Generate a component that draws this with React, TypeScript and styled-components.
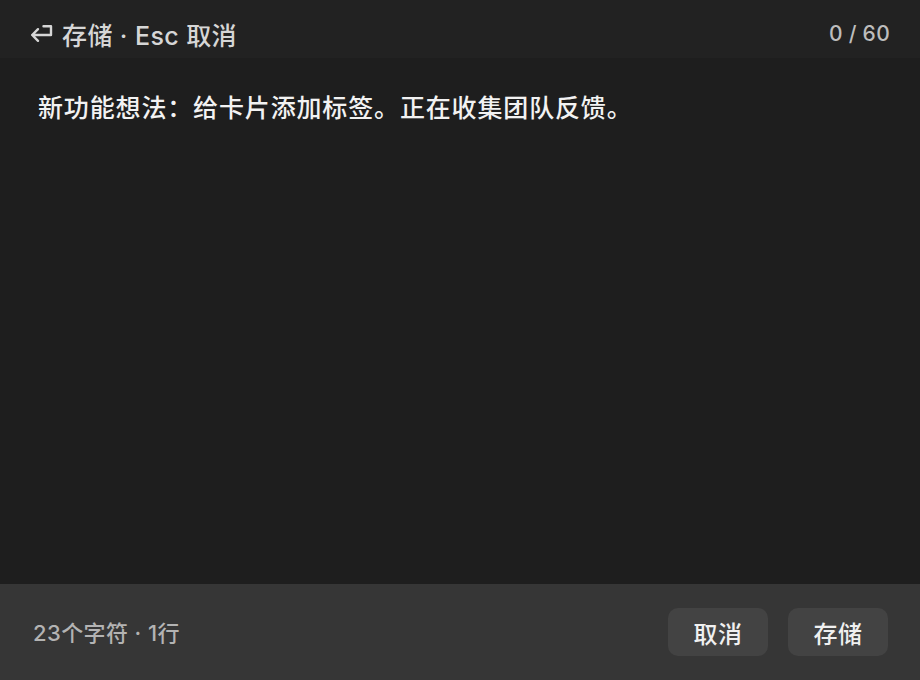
import * as React from "react";
import styled, { createGlobalStyle } from "styled-components";

const GlobalStyle = createGlobalStyle`
  html, body {
    margin: 0;
    padding: 0;
    background: #1e1e1e;
  }
  #root {
    height: 100vh;
  }
`;

const Editor = styled.div`
  height: 100vh;
  display: flex;
  flex-direction: column;
  font-family: Inter, "Noto Sans CJK SC", sans-serif;
  background: #1e1e1e;
`;

const Header = styled.div`
  height: 58px;
  flex-shrink: 0;
  display: flex;
  align-items: center;
  justify-content: space-between;
  padding: 10px 30px 0 30px;
  background: #222222;
  box-sizing: border-box;
`;

const Hint = styled.div`
  display: flex;
  align-items: center;
  gap: 8px;
  color: #d6d6d6;
  font-size: 25px;
  font-weight: 500;
  letter-spacing: 0.4px;
`;

const Counter = styled.div`
  color: #bdbdbd;
  font-size: 21px;
  font-weight: 500;
  letter-spacing: 0.3px;
  margin-top: -1px;
`;

const Body = styled.div`
  flex: 1;
  padding: 30px 38px;
  box-sizing: border-box;
`;

const Text = styled.div`
  color: #f2f2f2;
  font-size: 25px;
  font-weight: 500;
  letter-spacing: 0.85px;
`;

const Footer = styled.div`
  height: 96px;
  flex-shrink: 0;
  display: flex;
  align-items: center;
  justify-content: space-between;
  padding: 0 32px 0 33px;
  background: #363636;
  box-sizing: border-box;
`;

const Stats = styled.div`
  color: #b3b3b3;
  font-size: 22px;
  font-weight: 500;
  letter-spacing: 0.4px;
  margin-top: -2px;
`;

const Actions = styled.div`
  display: flex;
  gap: 20px;
`;

const Button = styled.button`
  width: 100px;
  height: 48px;
  border: none;
  border-radius: 10px;
  background: #434343;
  color: #f0f0f0;
  font-family: Inter, "Noto Sans CJK SC", sans-serif;
  font-size: 24px;
  font-weight: 500;
  letter-spacing: 0.5px;
  padding: 0;
  cursor: pointer;
`;

function ReturnIcon() {
  return (
    <svg width="24" height="20" viewBox="0 0 24 20" fill="none">
      <path
        d="M13.5 2.2H21V11H2.2M8 5.2L2.2 11L8 16.8"
        stroke="#d6d6d6"
        strokeWidth="2.4"
        strokeLinecap="round"
        strokeLinejoin="round"
      />
    </svg>
  );
}

export default function App() {
  return (
    <>
      <GlobalStyle />
      <Editor>
        <Header>
          <Hint>
            <ReturnIcon />
            <span>存储 · Esc 取消</span>
          </Hint>
          <Counter>0 / 60</Counter>
        </Header>
        <Body>
          <Text>新功能想法：给卡片添加标签。正在收集团队反馈。</Text>
        </Body>
        <Footer>
          <Stats>23个字符 · 1行</Stats>
          <Actions>
            <Button>取消</Button>
            <Button>存储</Button>
          </Actions>
        </Footer>
      </Editor>
    </>
  );
}
